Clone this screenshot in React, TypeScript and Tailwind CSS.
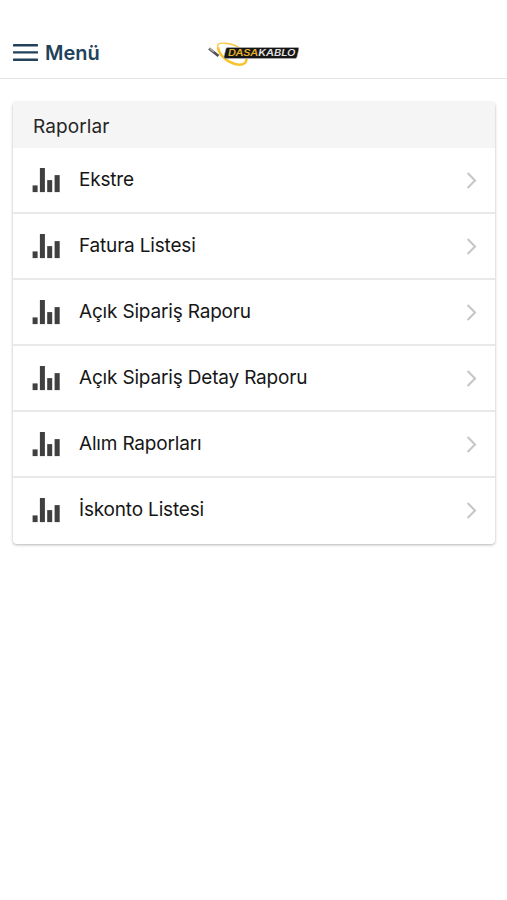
const reports = [
  "Ekstre",
  "Fatura Listesi",
  "Açık Sipariş Raporu",
  "Açık Sipariş Detay Raporu",
  "Alım Raporları",
  "İskonto Listesi",
];

const MenuIcon = () => (
  <svg width="25" height="18" viewBox="0 0 25 18" fill="#22425c">
    <rect y="0" width="25" height="2.4" rx="0.4" />
    <rect y="7.2" width="25" height="2.4" rx="0.4" />
    <rect y="14.6" width="25" height="2.4" rx="0.4" />
  </svg>
);

const StatsIcon = () => (
  <svg width="28" height="25" viewBox="0 0 28 25" fill="#404040">
    <rect x="0.6" y="17.4" width="5" height="6.7" />
    <rect x="7.9" y="0" width="5" height="24.1" />
    <rect x="15.2" y="12.1" width="5" height="12" />
    <rect x="22.6" y="7.1" width="5.1" height="17" />
  </svg>
);

const ChevronIcon = () => (
  <svg width="11" height="17" viewBox="0 0 11 17" fill="none">
    <path d="M1.6 1.1 9 8.5 1.6 15.9" stroke="#c6c6c6" strokeWidth="2.1" />
  </svg>
);

const Logo = () => (
  <svg width="92" height="28" viewBox="0 0 92 28" fill="none">
    <path
      d="M10 9.5C8.500 5 11 3.800 16.500 4.200c6 .4 12 2.500 15.500 5"
      stroke="#f5cb45"
      strokeWidth="1.4"
    />
    <path
      d="M10 8.500c1 7 8 14 17 16.500 6 1.600 11.500.5 11.500-5"
      stroke="#f6c430"
      strokeWidth="2.500"
    />
    <path d="M1 9.500 10.500 17" stroke="#505050" strokeWidth="2.800" />
    <path d="M1.500 9.300 6 12.800" stroke="#a8a8a8" strokeWidth="1.500" />
    <path
      d="M19.500 8.500H89.500q1.700 0 1.300 1.700l-1.800 7.700q-.4 1.600-2.200 1.600H17.500q-1.900 0-1.500-1.800l1.800-7.700Q18.200 8.500 19.500 8.500Z"
      fill="#161616"
      stroke="#b8b8b8"
      strokeWidth="0.6"
    />
    <text
      x="20"
      y="17.2"
      textLength="67.500"
      lengthAdjust="spacingAndGlyphs"
      fontFamily="Inter, sans-serif"
      fontSize="8.800"
      fontWeight="600"
      fontStyle="italic"
      fill="#e2e2e2"
    >
      <tspan fill="#e3b02b">DASA</tspan>KABLO
    </text>
  </svg>
);

const ReportItem = ({ label }: { label: string }) => (
  <li className="h-[66px] border-b-2 border-[#e9e9e9] last:border-transparent">
    <button className="flex h-full w-full items-center pl-[19px] pr-[18px] text-left">
      <StatsIcon />
      <span className="-mt-px ml-[19px] flex-1 text-[19px] leading-6 tracking-[-0.18px] text-[#161616]">
        {label}
      </span>
      <ChevronIcon />
    </button>
  </li>
);

const App = () => {
  return (
    <div className="min-h-screen bg-white font-['Inter',sans-serif]">
      <header className="grid h-[79px] grid-cols-[1fr_92px_1fr] border-b border-[#e4e4e4] pt-[27px]">
        <button className="flex h-[51px] items-center gap-[7px] pl-[13px] text-[20px] font-semibold text-[#22425c]">
          <MenuIcon />
          Menü
        </button>
        <div className="flex h-[51px] items-center pt-px">
          <Logo />
        </div>
      </header>
      <main className="pl-[13px] pr-3 pt-[23px]">
        <section className="overflow-hidden rounded-[4px] bg-white shadow-[0_1px_3px_rgba(0,0,0,0.3)]">
          <h2 className="flex h-[46px] items-center bg-[#f5f5f5] px-5 pt-[5px] text-[19px] tracking-[0.1px] text-[#262626]">
            Raporlar
          </h2>
          <ul>
            {reports.map((report) => (
              <ReportItem key={report} label={report} />
            ))}
          </ul>
        </section>
      </main>
    </div>
  );
};

export default App;
